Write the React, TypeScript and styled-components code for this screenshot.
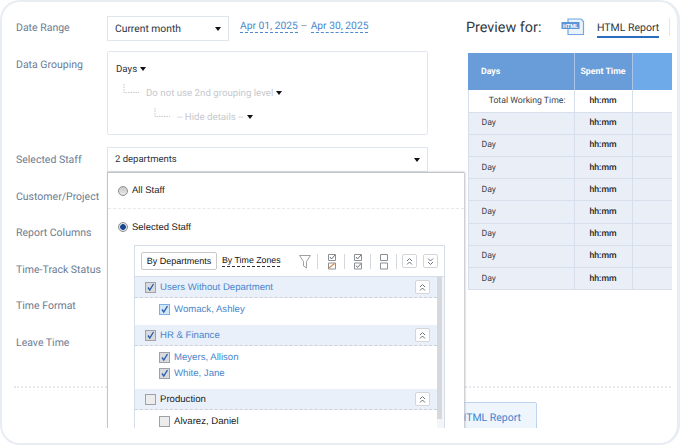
import React from "react";
import styled, { createGlobalStyle } from "styled-components";

const GlobalStyle = createGlobalStyle`
    html, body {
        margin: 0;
        background: #fff;
    }
`;

const Frame = styled.div`
    box-sizing: border-box;
    width: 680px;
    height: 445px;
    border: 2px solid #e8ecf3;
    border-right-width: 3px;
    border-radius: 20px;
    background: #fff;
    overflow: hidden;
    font-family: Roboto, "Liberation Sans", sans-serif;
    text-rendering: geometricPrecision;
`;

const Clip = styled.div`
    height: 426px;
    overflow: hidden;
`;

const Columns = styled.div`
    display: flex;
    height: 384px;
    padding: 14px 0 0 14px;
    box-sizing: border-box;
`;

const Form = styled.div`
    width: 450px;
    flex: none;
`;

const Row = styled.div<{ $mb?: number }>`
    display: flex;
    align-items: flex-start;
    margin-bottom: ${(p) => p.$mb ?? 0}px;
`;

const Label = styled.div<{ $pt?: number }>`
    width: 91px;
    flex: none;
    font-size: 10.5px;
    color: #6b7c93;
    line-height: 13px;
    padding-top: ${(p) => p.$pt ?? 5}px;
`;

const PlainRow = styled.div`
    display: flex;
    align-items: center;
    height: 36.5px;
    font-size: 10.5px;
    color: #6b7c93;
`;

const Select = styled.div<{ $w: number; $fs?: number }>`
    position: relative;
    box-sizing: border-box;
    width: ${(p) => p.$w}px;
    height: 25px;
    display: flex;
    align-items: center;
    justify-content: space-between;
    padding: 0 7px;
    border: 1px solid #dfe5ee;
    font-size: ${(p) => p.$fs ?? 10.3}px;
    color: #2c3440;
    background: #fff;
`;

const Caret = styled.span`
    display: inline-block;
    flex: none;
    width: 0;
    height: 0;
    border-left: 3.5px solid transparent;
    border-right: 3.5px solid transparent;
    border-top: 4px solid #111;
`;

const DateLinks = styled.div`
    display: flex;
    align-items: center;
    gap: 3px;
    margin-left: 11px;
    height: 17px;
    margin-top: 1px;
    font-size: 10.3px;
    color: #8a93a0;
`;

const DateLink = styled.span`
    color: #4b88cd;
    border-bottom: 1px dashed #4b88cd;
    line-height: 13px;
`;

const GroupBox = styled.div`
    box-sizing: border-box;
    width: 321px;
    height: 84px;
    border: 1px solid #e2e7ef;
    border-radius: 2px;
    padding: 10px 0 0 8px;
`;

const GroupLine = styled.div<{ $indent: number; $muted?: boolean }>`
    display: flex;
    align-items: center;
    gap: 3px;
    height: 14px;
    margin-bottom: 10px;
    padding-left: ${(p) => p.$indent}px;
    font-size: 9.7px;
    color: ${(p) => (p.$muted ? "#c6c9ce" : "#2c3440")};
`;

const Elbow = styled.svg`
    flex: none;
    width: 17px;
    height: 10px;
    margin: -8px 3px 0 0;
`;

const StaffField = styled.div`
    position: relative;
`;

const Popup = styled.div`
    position: absolute;
    top: 25px;
    left: 0;
    width: 357px;
    height: 262px;
    box-sizing: border-box;
    background: #fff;
    border-left: 1px solid #c2c4c7;
    border-top: 1px solid #c2c4c7;
    box-shadow: 1px 0 2px #b9bcc0;
    font-family: "Liberation Sans", Arial, sans-serif;
    font-size: 9.5px;
    color: #222;
`;

const RadioRow = styled.div<{ $divided?: boolean }>`
    display: flex;
    align-items: center;
    gap: 4px;
    height: 36px;
    padding-left: 10px;
    box-sizing: border-box;
    border-bottom: ${(p) => (p.$divided ? "1px dashed #e8e8e8" : "none")};
`;

const Radio = styled.span<{ $on?: boolean }>`
    box-sizing: border-box;
    width: 10px;
    height: 10px;
    border-radius: 50%;
    border: 1px solid #8f8f8f;
    background: ${(p) =>
        p.$on ? "radial-gradient(circle, #17488f 0 2.5px, #dfe3e8 3.2px)" : "linear-gradient(#c9c9c9, #e9e9e9)"};
`;

const TreePanel = styled.div`
    margin-left: 26px;
    width: 311px;
    border: 1px solid #d5dcea;
    border-bottom: none;
    box-sizing: border-box;
`;

const Toolbar = styled.div`
    display: flex;
    align-items: center;
    height: 31px;
    padding-left: 6px;
    box-sizing: border-box;
    border-bottom: 1px solid #d5dcea;
`;

const TabButton = styled.div`
    flex: none;
    box-sizing: border-box;
    width: 76px;
    height: 18px;
    display: flex;
    align-items: center;
    justify-content: center;
    border: 1px solid #c9c9c9;
    border-radius: 2px;
    font-size: 9px;
    color: #111;
    white-space: nowrap;
`;

const TabLink = styled.div`
    flex: none;
    width: 58px;
    margin: 0 19px 0 5px;
    font-size: 8.8px;
    color: #111;
    line-height: 11px;
    white-space: nowrap;
    border-bottom: 1px dashed #333;
`;

const ToolIcon = styled.svg<{ $w: number }>`
    flex: none;
    width: ${(p) => p.$w}px;
    height: 17px;
`;

const ToolSep = styled.span<{ $ml?: number; $mr?: number }>`
    flex: none;
    width: 1px;
    height: 15px;
    margin: 0 ${(p) => p.$mr ?? 10}px 0 ${(p) => p.$ml ?? 8}px;
    background: #d4d7db;
`;

const SmallButton = styled.span<{ $mr?: number }>`
    flex: none;
    box-sizing: border-box;
    width: 15px;
    height: 14px;
    display: flex;
    align-items: center;
    justify-content: center;
    margin-right: ${(p) => p.$mr ?? 0}px;
    border: 1px solid #d2d5d9;
    border-radius: 2px;
    background: #fff;
`;

const ListArea = styled.div`
    display: flex;
`;

const Groups = styled.div`
    flex: 1;
    min-width: 0;
`;

const Track = styled.div`
    flex: none;
    width: 7px;
    background: #f3f5f8;
`;

const Thumb = styled.div`
    width: 5px;
    height: 142px;
    background: #d5d9de;
`;

const GroupHead = styled.div`
    display: flex;
    align-items: center;
    box-sizing: border-box;
    height: 21px;
    padding: 0 7px 0 10px;
    background: #e9f0f9;
    border-bottom: 1px dashed #ccd2dc;
`;

const GroupBody = styled.div`
    padding: 3px 0 8px 24px;
`;

const Item = styled.div`
    display: flex;
    align-items: center;
    height: 16px;
`;

const CheckBox = styled.span<{ $on?: boolean; $blue?: boolean }>`
    box-sizing: border-box;
    flex: none;
    width: 11px;
    height: 11px;
    margin-right: 4px;
    border: 1px solid ${(p) => (p.$blue ? "#7fb0df" : "#9ea2a7")};
    background: ${(p) => (p.$blue ? "#d3e6f8" : p.$on ? "#d8dadd" : "#ececec")};
    display: flex;
    align-items: center;
    justify-content: center;
`;

const Name = styled.span<{ $on?: boolean }>`
    font-size: 9.6px;
    color: ${(p) => (p.$on ? "#4a86cc" : "#222")};
    flex: 1;
`;

const Preview = styled.div`
    flex: 1;
    min-width: 0;
`;

const PreviewHead = styled.div`
    display: flex;
    align-items: center;
    height: 26px;
    margin-bottom: 13px;
    margin-top: -2px;
`;

const PreviewTitle = styled.div`
    font-size: 14.4px;
    color: #333a44;
    width: 95px;
    flex: none;
`;

const FormatTab = styled.div`
    margin-left: 12px;
    font-size: 10.5px;
    line-height: 14px;
    color: #2e3640;
    padding: 4px 0 1px;
    border-bottom: 2px solid #2a6cbd;
    white-space: nowrap;
`;

const HeadSep = styled.span`
    width: 1px;
    height: 18px;
    margin-left: 10px;
    background: #e3e6ea;
`;

const TableClip = styled.div`
    width: 204px;
    margin-left: 1.5px;
    overflow: hidden;
`;

const Table = styled.table`
    width: 244px;
    table-layout: fixed;
    border-collapse: collapse;
    font-size: 8.7px;
    color: #333;
`;

const HeadCell = styled.th<{ $left?: boolean; $bg?: string }>`
    height: 37px;
    padding: 0;
    padding-left: ${(p) => (p.$left ? 13 : 0)}px;
    text-align: ${(p) => (p.$left ? "left" : "center")};
    color: #fff;
    font-size: 8.8px;
    font-weight: 700;
    background: ${(p) => p.$bg ?? "#689dda"};
    border-right: 1px solid #a9c6ea;
`;

const BodyRow = styled.tr<{ $alt?: boolean }>`
    height: 22.2px;
    background: ${(p) => (p.$alt ? "#eaeef6" : "#fff")};
    border-bottom: 1px solid #d6dfeb;

    td:first-child {
        border-left: 1px solid #d6dfeb;
    }
`;

const Cell = styled.td<{ $align?: string; $time?: boolean }>`
    padding: 0 8px 0 13px;
    text-align: ${(p) => p.$align ?? "left"};
    border-right: 1px solid #d6dfeb;
    color: ${(p) => (p.$time ? "#222" : "#3c434c")};
    font-weight: ${(p) => (p.$time ? 500 : 400)};
`;

const TimeCell = styled(Cell)`
    padding: 0;
    text-align: center;
`;

const Divider = styled.div`
    margin: 0 6px 0 12px;
    border-top: 2px dotted #e6e8ec;
`;

const Footer = styled.div`
    display: flex;
    justify-content: flex-end;
    width: 535px;
    padding-top: 14px;
`;

const ReportButton = styled.div`
    height: 36px;
    padding: 8px 15px 0 16px;
    box-sizing: border-box;
    border: 1px solid #bcd5ef;
    border-radius: 2px;
    background: #eef5fc;
    font-size: 10.5px;
    color: #3f83cf;
`;

const ElbowLine = () => (
    <Elbow viewBox="0 0 17 10">
        <path d="M1 0V8.5H16" fill="none" stroke="#c6c9ce" strokeDasharray="1.5 1" />
    </Elbow>
);

const Check = () => (
    <svg width="9" height="9" viewBox="0 0 9 9">
        <path d="M2 4.5L3.8 7L7.5 1" fill="none" stroke="#2b5fae" strokeWidth="1.4" />
    </svg>
);

const Chevrons = ({ down }: { down?: boolean }) => (
    <svg width="9" height="9" viewBox="0 0 9 9">
        <path
            d={down ? "M2 1.5L4.5 4L7 1.5M2 5L4.5 7.5L7 5" : "M2 4L4.5 1.5L7 4M2 7.5L4.5 5L7 7.5"}
            fill="none"
            stroke="#6d7176"
        />
    </svg>
);

const HtmlIcon = () => (
    <svg width="24" height="18" viewBox="0 0 24 18" style={{ flex: "none" }}>
        <path d="M7 1H20L22.5 3.5V16.5H7Z" fill="#eaf3fc" stroke="#6fa8e2" strokeWidth="1.2" />
        <rect x="0.5" y="4" width="18" height="7" fill="#5a97d8" />
        <text x="9.5" y="9.6" textAnchor="middle" fontSize="5.5" fontWeight="700" fill="#fff" fontFamily="Roboto">
            HTML
        </text>
    </svg>
);

const Group = ({
    name,
    on,
    people,
}: {
    name: string;
    on?: boolean;
    people: { name: string; blue?: boolean }[];
}) => (
    <>
        <GroupHead>
            <CheckBox $on={on}>{on && <Check />}</CheckBox>
            <Name $on={on}>{name}</Name>
            <SmallButton>
                <Chevrons />
            </SmallButton>
        </GroupHead>
        <GroupBody>
            {people.map((person) => (
                <Item key={person.name}>
                    <CheckBox $on={on} $blue={person.blue}>
                        {on && <Check />}
                    </CheckBox>
                    <Name $on={on}>{person.name}</Name>
                </Item>
            ))}
        </GroupBody>
    </>
);

const dayRows = Array.from({ length: 8 }, (_, i) => i);

export default function App() {
    return (
        <>
            <GlobalStyle />
            <Frame>
                <Clip>
                    <Columns>
                        <Form>
                            <Row $mb={10}>
                                <Label>Date Range</Label>
                                <Select $w={122}>
                                    Current month
                                    <Caret />
                                </Select>
                                <DateLinks>
                                    <DateLink>Apr 01, 2025</DateLink>–<DateLink>Apr 30, 2025</DateLink>
                                </DateLinks>
                            </Row>
                            <Row $mb={12}>
                                <Label $pt={7}>Data Grouping</Label>
                                <GroupBox>
                                    <GroupLine $indent={0}>
                                        Days
                                        <Caret />
                                    </GroupLine>
                                    <GroupLine $indent={7} $muted>
                                        <ElbowLine />
                                        Do not use 2nd grouping level
                                        <Caret />
                                    </GroupLine>
                                    <GroupLine $indent={38} $muted>
                                        <ElbowLine />
                                        -- Hide details --
                                        <Caret />
                                    </GroupLine>
                                </GroupBox>
                            </Row>
                            <Row $mb={6}>
                                <Label $pt={6}>Selected Staff</Label>
                                <StaffField>
                                    <Select $w={321} $fs={9.5}>
                                        2 departments
                                        <Caret />
                                    </Select>
                                    <Popup>
                                        <RadioRow $divided>
                                            <Radio />
                                            All Staff
                                        </RadioRow>
                                        <RadioRow>
                                            <Radio $on />
                                            Selected Staff
                                        </RadioRow>
                                        <TreePanel>
                                            <Toolbar>
                                                <TabButton>By Departments</TabButton>
                                                <TabLink>By Time Zones</TabLink>
                                                <ToolIcon $w={12} viewBox="0 0 12 17">
                                                    <path d="M0.5 2.5H11.5L7.5 8.5V15L4.5 13V8.5Z" fill="none" stroke="#9aa0a6" />
                                                </ToolIcon>
                                                <ToolSep $ml={6} />
                                                <ToolIcon $w={8} viewBox="0 0 8 17">
                                                    <path d="M0.5 1.5H7.5V7.5H0.5ZM0.5 10H7.5V16H0.5Z" fill="none" stroke="#8b9096" />
                                                    <path d="M2 4L3.5 6L7 2" fill="none" stroke="#6d7176" />
                                                    <path d="M1 15L6.5 10.5" fill="none" stroke="#e08a4c" strokeWidth="1.3" />
                                                </ToolIcon>
                                                <ToolSep $mr={9} />
                                                <ToolIcon $w={8} viewBox="0 0 8 17">
                                                    <path d="M0.5 1.5H7.5V7.5H0.5ZM0.5 10H7.5V16H0.5Z" fill="none" stroke="#8b9096" />
                                                    <path d="M2 4L3.5 6L7 2M2 12.5L3.5 14.5L7 10.5" fill="none" stroke="#6d7176" />
                                                </ToolIcon>
                                                <ToolSep $mr={9} />
                                                <ToolIcon $w={8} viewBox="0 0 8 17">
                                                    <path d="M0.5 1.5H7.5V7.5H0.5ZM0.5 10H7.5V16H0.5Z" fill="none" stroke="#8b9096" />
                                                </ToolIcon>
                                                <ToolSep $mr={5} />
                                                <SmallButton $mr={6}>
                                                    <Chevrons />
                                                </SmallButton>
                                                <SmallButton>
                                                    <Chevrons down />
                                                </SmallButton>
                                            </Toolbar>
                                            <ListArea>
                                                <Groups>
                                                    <Group
                                                        name="Users Without Department"
                                                        on
                                                        people={[{ name: "Womack, Ashley", blue: true }]}
                                                    />
                                                    <Group
                                                        name="HR & Finance"
                                                        on
                                                        people={[{ name: "Meyers, Allison" }, { name: "White, Jane" }]}
                                                    />
                                                    <Group name="Production" people={[{ name: "Alvarez, Daniel" }]} />
                                                </Groups>
                                                <Track>
                                                    <Thumb />
                                                </Track>
                                            </ListArea>
                                        </TreePanel>
                                    </Popup>
                                </StaffField>
                            </Row>
                            <PlainRow>Customer/Project</PlainRow>
                            <PlainRow>Report Columns</PlainRow>
                            <PlainRow>Time-Track Status</PlainRow>
                            <PlainRow>Time Format</PlainRow>
                            <PlainRow>Leave Time</PlainRow>
                        </Form>
                        <Preview>
                            <PreviewHead>
                                <PreviewTitle>Preview for:</PreviewTitle>
                                <HtmlIcon />
                                <FormatTab>HTML Report</FormatTab>
                                <HeadSep />
                            </PreviewHead>
                            <TableClip>
                                <Table>
                                    <colgroup>
                                        <col width="106" />
                                        <col width="58" />
                                        <col width="80" />
                                    </colgroup>
                                    <thead>
                                        <tr>
                                            <HeadCell $left>Days</HeadCell>
                                            <HeadCell>Spent Time</HeadCell>
                                            <HeadCell $bg="#6eaaea" />
                                        </tr>
                                    </thead>
                                    <tbody>
                                        <BodyRow>
                                            <Cell $align="right">Total Working Time:</Cell>
                                            <TimeCell $time>hh:mm</TimeCell>
                                            <Cell />
                                        </BodyRow>
                                        {dayRows.map((i) => (
                                            <BodyRow key={i} $alt>
                                                <Cell>Day</Cell>
                                                <TimeCell $time>hh:mm</TimeCell>
                                                <Cell />
                                            </BodyRow>
                                        ))}
                                    </tbody>
                                </Table>
                            </TableClip>
                        </Preview>
                    </Columns>
                    <Divider />
                    <Footer>
                        <ReportButton>Download HTML Report</ReportButton>
                    </Footer>
                </Clip>
            </Frame>
        </>
    );
}
